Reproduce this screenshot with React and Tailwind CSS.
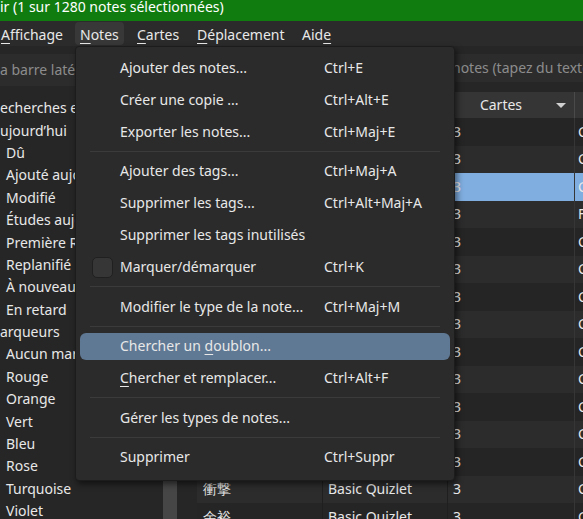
import React from 'react'

const sidebarItems = [
  { t: 'echerches enregistrées', l: 0 },
  { t: 'ujourd’hui', l: 0 },
  { t: 'Dû', l: 1 },
  { t: 'Ajouté aujourd’hui', l: 1 },
  { t: 'Modifié', l: 1 },
  { t: 'Études aujourd’hui', l: 1 },
  { t: 'Première Révision', l: 1 },
  { t: 'Replanifié', l: 1 },
  { t: 'À nouveau', l: 1 },
  { t: 'En retard', l: 1 },
  { t: 'arqueurs', l: 0 },
  { t: 'Aucun marqueur', l: 1 },
  { t: 'Rouge', l: 1 },
  { t: 'Orange', l: 1 },
  { t: 'Vert', l: 1 },
  { t: 'Bleu', l: 1 },
  { t: 'Rose', l: 1 },
  { t: 'Turquoise', l: 1 },
  { t: 'Violet', l: 1 },
]

const words = ['勉強', '練習', '準備', '経験', '説明', '心配', '約束', '意見', '興味', '関係', '研究', '運動', '発表', '衝撃', '余裕']

const rows = words.map((w, i) => ({
  sort: w,
  type: 'Basic Quizlet',
  cards: '3',
  deck: i === 3 ? 'F' : 'C',
}))

const U = ({ children }) => (
  <span className="underline underline-offset-[3px] decoration-1">{children}</span>
)

const menuItems = [
  { label: 'Ajouter des notes...', sc: 'Ctrl+E' },
  { label: 'Créer une copie ...', sc: 'Ctrl+Alt+E' },
  { label: 'Exporter les notes...', sc: 'Ctrl+Maj+E' },
  'sep',
  { label: 'Ajouter des tags...', sc: 'Ctrl+Maj+A' },
  { label: 'Supprimer les tags...', sc: 'Ctrl+Alt+Maj+A' },
  { label: 'Supprimer les tags inutilisés' },
  { label: 'Marquer/démarquer', sc: 'Ctrl+K', check: true },
  'sep',
  { label: 'Modifier le type de la note...', sc: 'Ctrl+Maj+M' },
  'sep',
  { label: <>Chercher un <U>d</U>oublon...</>, active: true },
  { label: <><U>C</U>hercher et remplacer...</>, sc: 'Ctrl+Alt+F' },
  'sep',
  { label: 'Gérer les types de notes...' },
  'sep',
  { label: 'Supprimer', sc: 'Ctrl+Suppr' },
]

function NotesMenu() {
  return (
    <div className="absolute left-[75px] top-[46px] w-[380px] pt-[4.5px] pb-[7px] bg-[#2b2b2b] border border-[#1c1c1c] rounded-[4px] shadow-[2px_3px_6px_rgba(0,0,0,0.55)] z-10">
      {menuItems.map((item, i) =>
        item === 'sep' ? (
          <div key={i} className="h-[7.5px] flex items-center px-[14px]">
            <div className="h-px w-full bg-[#3b3b3b]" />
          </div>
        ) : (
          <div key={i} className="h-8 px-1 py-[2.5px]">
            <div
              className={`relative h-full flex items-center rounded-[6px] ${
                item.active ? 'bg-[#5f7893]' : ''
              }`}
            >
              {item.check && (
                <div className="absolute left-[12px] top-[3px] w-[21px] h-[21px] rounded-[5px] bg-[#363636] border border-[#202020]" />
              )}
              <span className="pl-[40px] w-[244px] shrink-0 whitespace-nowrap">{item.label}</span>
              {item.sc && <span className="whitespace-nowrap">{item.sc}</span>}
            </div>
          </div>
        )
      )}
    </div>
  )
}

function App() {
  return (
    <div className="relative w-[583px] h-[519px] overflow-hidden bg-[#262626] text-[#e8e8e8] text-[14px] font-['Noto_Sans','Segoe_UI',sans-serif] leading-none">
      {/* Title bar */}
      <div className="h-[21px] bg-[#107c10] text-white whitespace-nowrap">
        ir (1 sur 1280 notes sélectionnées)
      </div>

      {/* Menu bar */}
      <div className="h-[25px] pt-[2px] bg-[#2b2b2b] flex items-center whitespace-nowrap">
        <div className="w-[75px] pl-[1px]"><U>A</U>ffichage</div>
        <div className="w-[49px] h-[23px] -mt-[2px] pt-[2px] pl-[5px] flex items-center rounded-[4px] bg-[#383838]"><U>N</U>otes</div>
        <div className="ml-[13px] w-[60px]"><U>C</U>artes</div>
        <div className="w-[105px]"><U>D</U>éplacement</div>
        <div>Aid<U>e</U></div>
      </div>

      {/* Main area */}
      <div className="flex h-[473px]">
        <aside className="w-[163px] shrink-0 pt-2 overflow-hidden">
          <div className="h-8 bg-[#2c2c2c] flex items-center text-[#8c8c8c] whitespace-nowrap">
            a barre latérale
          </div>
          <div className="mt-[11px]">
            {sidebarItems.map((s, i) => (
              <div
                key={i}
                className={`h-[22.4px] flex items-center whitespace-nowrap ${s.l ? 'pl-[6px]' : ''}`}
              >
                {s.t}
              </div>
            ))}
          </div>
        </aside>

        <div className="w-[14px] shrink-0 bg-[#464646]" />

        <div className="flex-1 min-w-0 pl-5 pt-2 overflow-hidden">
          <div className="h-7 bg-[#2c2c2c] flex items-center pl-[255px] text-[#8c8c8c] whitespace-nowrap">
            notes (tapez du texte...
          </div>

          <div className="mt-[10px] w-[420px]">
            <div className="h-[26px] flex bg-[#353535]">
              <div className="w-[126px] border-r border-[#454545]" />
              <div className="w-[125px] border-r border-[#454545]" />
              <div className="w-[127px] pr-5 border-r border-[#4a4a4a] relative flex items-center justify-center">
                Cartes
                <svg className="absolute right-[8px] top-[11px]" width="10" height="5" viewBox="0 0 10 5">
                  <path d="M0 0h10L5 5z" fill="#d0d0d0" />
                </svg>
              </div>
              <div className="flex-1" />
            </div>

            {rows.map((r, i) => (
              <div
                key={i}
                className={`h-[27.5px] flex items-center whitespace-nowrap ${
                  i === 2 ? 'bg-[#80aee0]' : i % 2 ? 'bg-[#2c2c2c]' : 'bg-[#252525]'
                }`}
              >
                <div className="w-[126px] h-full flex items-center pl-[6px] border-r border-[#1f1f1f]">{r.sort}</div>
                <div className="w-[125px] h-full flex items-center pl-[5px] border-r border-[#1f1f1f]">{r.type}</div>
                <div className="w-[127px] h-full flex items-center pl-[5px] border-r border-[#363636]">{r.cards}</div>
                <div className="flex-1 h-full flex items-center pl-[3px]">{r.deck}</div>
              </div>
            ))}
          </div>
        </div>
      </div>

      <NotesMenu />
    </div>
  )
}

export default App
